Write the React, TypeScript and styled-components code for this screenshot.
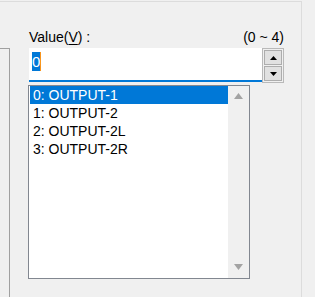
import styled, { createGlobalStyle } from "styled-components";

const GlobalStyle = createGlobalStyle`
  html, body {
    margin: 0;
    padding: 0;
    background: #f0f0f0;
  }
  body {
    font-family: "Liberation Sans", Arial, sans-serif;
    font-size: 14px;
    color: #000;
  }
`;

const Screen = styled.div`
  width: 315px;
  height: 297px;
  background: #f0f0f0;
  overflow: hidden;
  padding-top: 1px;
  box-sizing: border-box;
`;

const GroupBox = styled.div`
  width: 302px;
  height: 296px;
  box-sizing: border-box;
  border-top: 1px solid #dcdcdc;
  border-right: 1px solid #dcdcdc;
  display: flex;
`;

const SidePanel = styled.div`
  width: 9px;
  margin-top: 46px;
  border-top: 1px solid #a0a0a0;
  border-right: 1px solid #a0a0a0;
  flex-shrink: 0;
`;

const Content = styled.div`
  margin-left: 18px;
  width: 256px;
  display: flex;
  flex-direction: column;
`;

const LabelRow = styled.div`
  margin-top: 27px;
  margin-left: 1px;
  height: 16px;
  line-height: 16px;
  margin-bottom: 3px;
  display: flex;
  justify-content: space-between;
  white-space: nowrap;
`;

const Label = styled.span`
  u {
    text-decoration: underline;
    text-underline-offset: 2px;
  }
`;

const EditRow = styled.div`
  margin-left: 1px;
  display: flex;
  align-items: flex-start;
`;

const Edit = styled.div`
  width: 233px;
  height: 34px;
  box-sizing: border-box;
  background: #fff;
  border-bottom: 2px solid #0078d7;
  padding: 4px 0 0 3px;
`;

const Selected = styled.span`
  display: inline-block;
  background: #0078d7;
  color: #fff;
  font-size: 15px;
  height: 19px;
  line-height: 19px;
  border-right: 1px solid #f7941d;
`;

const Spin = styled.div`
  width: 22px;
  height: 35px;
  box-sizing: border-box;
  border: 1px solid #b9b9b9;
  padding: 1px;
  display: flex;
  flex-direction: column;
  gap: 1px;
`;

const SpinButton = styled.div`
  flex: 1;
  background: #e1e1e1;
  border: 1px solid #adadad;
  display: flex;
  align-items: center;
  justify-content: center;
`;

const ListBox = styled.div`
  margin-top: 2px;
  width: 222px;
  height: 194px;
  box-sizing: border-box;
  border: 1px solid #828790;
  background: #fff;
  display: flex;
`;

const Items = styled.div`
  flex: 1;
  padding: 0 0 0 1px;
`;

const Item = styled.div<{ $active?: boolean }>`
  height: 18px;
  line-height: 18px;
  padding-left: 3px;
  white-space: nowrap;
  background: ${(p) => (p.$active ? "#0078d7" : "transparent")};
  color: ${(p) => (p.$active ? "#fff" : "#000")};
`;

const ScrollBar = styled.div`
  width: 21px;
  box-sizing: border-box;
  background: #f0f0f0;
  display: flex;
  flex-direction: column;
  justify-content: space-between;
  align-items: center;
  padding: 7px 0 8px;
`;

const Arrow = ({ up, color, w, h }: { up: boolean; color: string; w: number; h: number }) => (
  <svg width={w} height={h} viewBox={`0 0 ${w} ${h}`}>
    <polygon
      points={up ? `0,${h} ${w / 2},0 ${w},${h}` : `0,0 ${w},0 ${w / 2},${h}`}
      fill={color}
    />
  </svg>
);

const items = ["0: OUTPUT-1", "1: OUTPUT-2", "2: OUTPUT-2L", "3: OUTPUT-2R"];

export default function App() {
  return (
    <>
      <GlobalStyle />
      <Screen>
        <GroupBox>
          <SidePanel />
          <Content>
            <LabelRow>
              <Label>
                Value(<u>V</u>) :
              </Label>
              <span>(0 ~ 4)</span>
            </LabelRow>
            <EditRow>
              <Edit>
                <Selected>0</Selected>
              </Edit>
              <Spin>
                <SpinButton>
                  <Arrow up color="#000" w={7} h={4} />
                </SpinButton>
                <SpinButton>
                  <Arrow up={false} color="#000" w={7} h={4} />
                </SpinButton>
              </Spin>
            </EditRow>
            <ListBox>
              <Items>
                {items.map((t, i) => (
                  <Item key={t} $active={i === 0}>
                    {t}
                  </Item>
                ))}
              </Items>
              <ScrollBar>
                <Arrow up color="#a3a3a3" w={9} h={6} />
                <Arrow up={false} color="#a3a3a3" w={9} h={6} />
              </ScrollBar>
            </ListBox>
          </Content>
        </GroupBox>
      </Screen>
    </>
  );
}
